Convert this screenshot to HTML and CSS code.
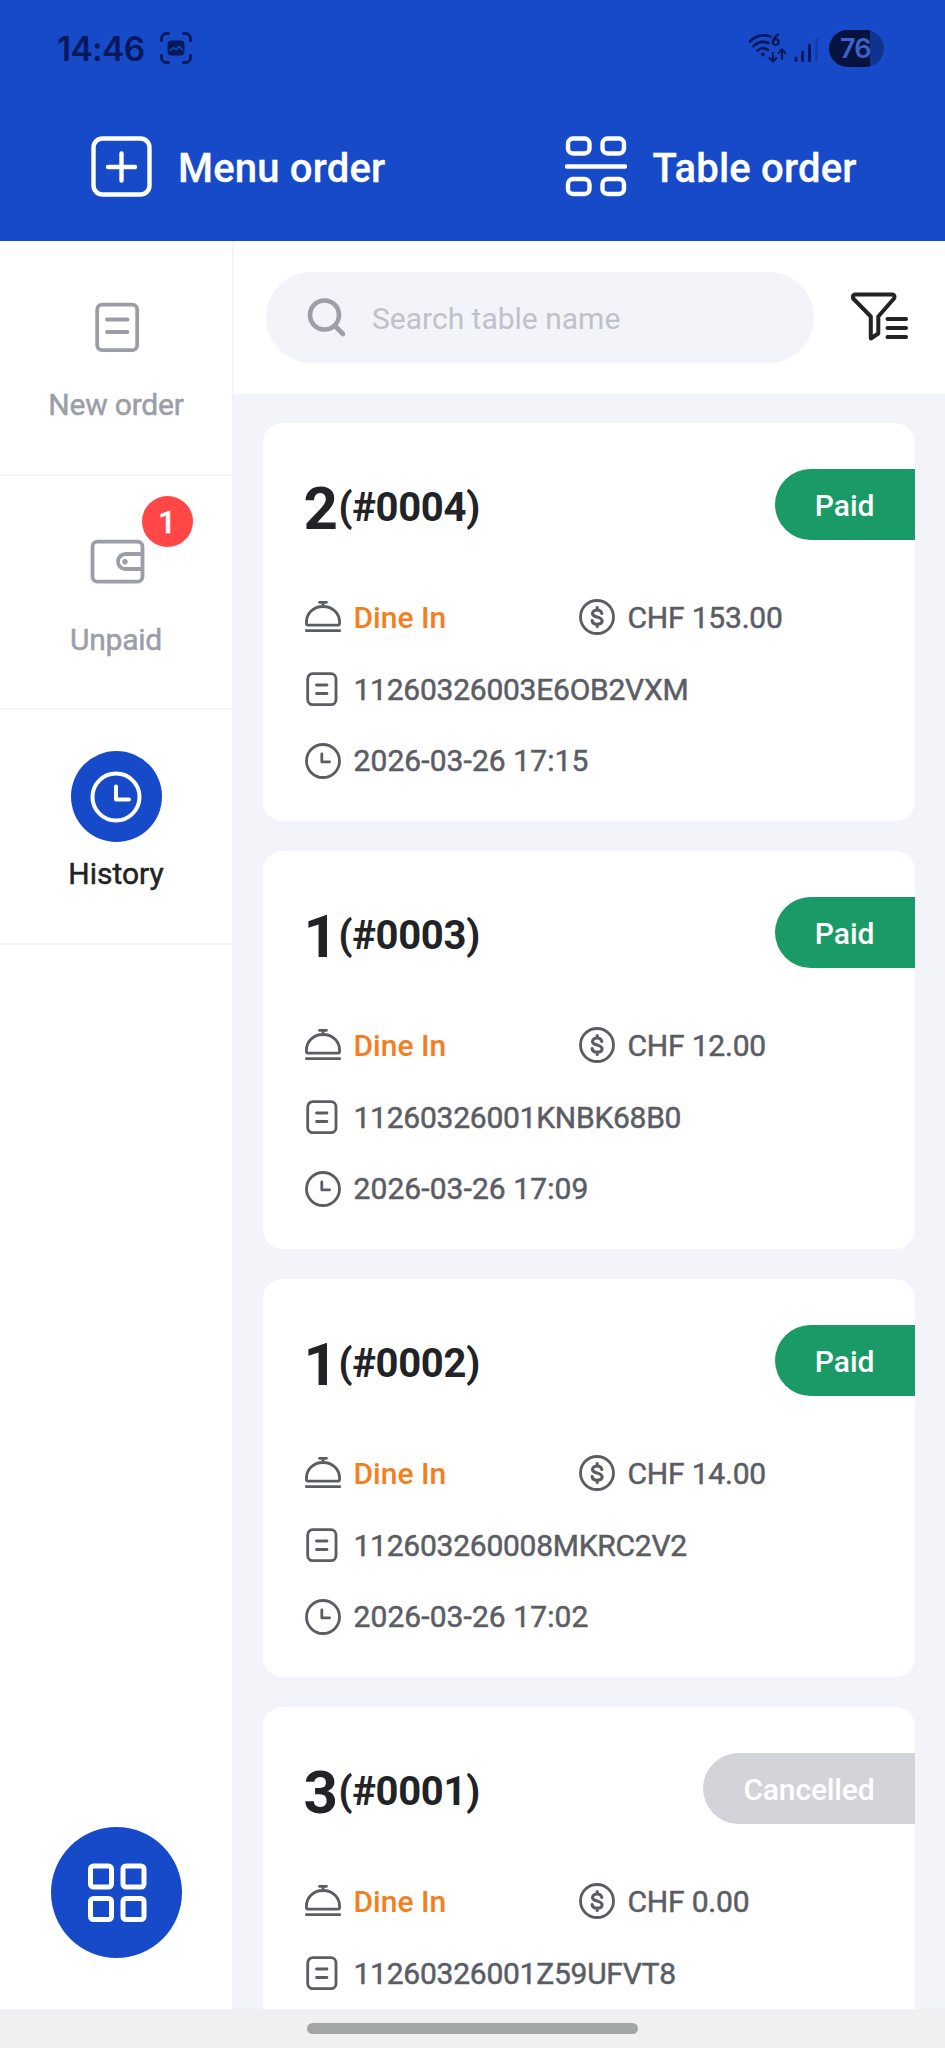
FILE: index.html
```html
<!DOCTYPE html>
<html lang="en">
<head>
<meta charset="utf-8">
<title>Orders</title>
<link rel="stylesheet" href="styles.css">
</head>
<body>
<svg class="sprite" aria-hidden="true">
  <symbol id="bell" viewBox="0 0 36 36"><path d="M14.500 3.300h7M18 3.500v4M1.500 25.200C.6 14.500 8.500 7.500 18 7.500S35.400 14.500 34.500 25.200q-.2 1-1.200 1H2.700q-1 0-1.200-1zM1.300 31.600h33.400"/></symbol>
  <symbol id="doc" viewBox="0 0 36 36"><rect x="2.700" y="2.700" width="28.300" height="31" rx="5"/><path d="M11.500 14h10.500M11.500 22.500h10.500"/></symbol>
  <symbol id="clock" viewBox="0 0 36 36"><circle cx="18" cy="18" r="16.500"/><path d="M16.800 11v7.800h7.800"/></symbol>
  <symbol id="coin" viewBox="0 0 36 36"><circle cx="18" cy="18" r="16.500"/><path stroke-width="3.100" d="M22.800 14.500c-.4-2.400-2.300-3.500-4.700-3.500-2.700 0-4.600 1.300-4.600 3.400 0 2.300 2.200 2.900 4.600 3.500 2.700.7 5 1.400 5 3.900 0 2.300-2.100 3.500-5 3.500-2.700 0-4.700-1.300-5-3.800M18.200 8.500v2.500M18.200 25v2.500"/></symbol>
</svg>
<header class="top">
  <div class="status">
    <span class="time">14:46</span>
    <svg class="shot" viewBox="0 0 32 32"><path class="line" d="M1.500 8.500v-2a5 5 0 0 1 5-5h2M23.500 1.500h2a5 5 0 0 1 5 5v2M30.500 23.500v2a5 5 0 0 1-5 5h-2M8.500 30.500h-2a5 5 0 0 1-5-5v-2"/><rect x="7.500" y="8.500" width="17" height="15" rx="4"/><path class="hill" d="M10 18.500l3.300-3 3 2.200 3-3.400 3.200 3.700"/></svg>
    <svg class="wifi" viewBox="0 0 38 30"><path class="line" d="M2 8.500C7.500 2.500 15 1.200 22.500 3.500M5.500 13.200C10 8.500 15.500 8 20.500 10M9.500 17.500c3-3 7-3 10.500-.5"/><circle cx="15" cy="21.500" r="2"/><path class="line thin" d="M30 1.500q-4.500 3-5 7M25 20v8M21.500 25l3.500 3.500 3.500-3.500M34 26v-9M30.500 20l3.500-3.500 3.500 3.500"/><circle class="line thin" cx="27.700" cy="9" r="2.900"/></svg>
    <svg class="signal" viewBox="0 0 24 26"><path d="M2 21v2.500M8.500 15v8.500M15.500 8v15.500"/><path class="dim" d="M22.300 2v21.500"/></svg>
    <span class="battery">76</span>
  </div>
  <nav class="actions">
    <a class="action menu"><svg viewBox="0 0 62 62"><rect x="2.500" y="2.500" width="56" height="56" rx="9"/><path d="M30.500 17.500v27M17 31h27"/></svg><span>Menu order</span></a>
    <a class="action table"><svg viewBox="0 0 62 62"><rect x="3" y="2.500" width="21.500" height="15" rx="5"/><rect x="37.500" y="2.500" width="21.500" height="15" rx="5"/><path d="M2 30.500h58"/><rect x="3" y="43" width="21.500" height="15" rx="5"/><rect x="37.500" y="43" width="21.500" height="15" rx="5"/></svg><span>Table order</span></a>
  </nav>
</header>
<main class="body">
  <aside class="side">
    <a class="tab"><span class="disc"><svg viewBox="0 0 60 60"><rect x="11.200" y="6.700" width="40" height="45.500" rx="5"/><path d="M21 21.500h20.500M21 34h20.500"/></svg></span><span class="name">New order</span></a>
    <a class="tab"><span class="disc"><svg viewBox="0 0 60 60"><rect x="6.500" y="9.700" width="50" height="40" rx="5"/><path d="M56 22H39.500a7.500 7.500 0 0 0 0 15H56"/><circle class="dot" cx="39" cy="29.800" r="2.700"/></svg><b class="count">1</b></span><span class="name">Unpaid</span></a>
    <a class="tab active"><span class="disc"><svg viewBox="0 0 60 60"><circle cx="30" cy="30" r="23.500"/><path d="M30 19.500v13h13"/></svg></span><span class="name">History</span></a>
    <a class="apps"><svg viewBox="0 0 60 60"><rect x="3.500" y="3" width="21" height="21" rx="3"/><rect x="36" y="3" width="21" height="21" rx="3"/><rect x="3.500" y="35.500" width="21" height="21" rx="3"/><rect x="36" y="35.500" width="21" height="21" rx="3"/></svg></a>
  </aside>
  <section class="content">
    <div class="tools">
      <div class="search"><svg viewBox="0 0 40 40"><circle cx="17.500" cy="17" r="14.500"/><path d="M28 28l8 8"/></svg><span>Search table name</span></div>
      <svg class="filter" viewBox="0 0 60 50"><path d="M5 3.500h37.500q3 1 1.500 4L28.300 25.500V42.500L20.800 47.500V25.500L3.200 7.500q-1-3 1.800-4z"/><path d="M37.500 28h18.500M37.500 37h18.500M37.500 46h18.500"/></svg>
    </div>
    <div class="list">
      <article class="card">
        <div class="head"><b class="num">2</b><b class="ref">(#0004)</b><span class="badge">Paid</span></div>
        <div class="row"><span class="cell kind"><svg><use href="#bell"/></svg><em>Dine In</em></span><span class="cell"><svg><use href="#coin"/></svg><span class="price">CHF 153.00</span></span></div>
        <div class="row"><svg><use href="#doc"/></svg><span class="code">11260326003E6OB2VXM</span></div>
        <div class="row"><svg><use href="#clock"/></svg><span class="date">2026-03-26 17:15</span></div>
      </article>
      <article class="card">
        <div class="head"><b class="num">1</b><b class="ref">(#0003)</b><span class="badge">Paid</span></div>
        <div class="row"><span class="cell kind"><svg><use href="#bell"/></svg><em>Dine In</em></span><span class="cell"><svg><use href="#coin"/></svg><span class="price">CHF 12.00</span></span></div>
        <div class="row"><svg><use href="#doc"/></svg><span class="code">11260326001KNBK68B0</span></div>
        <div class="row"><svg><use href="#clock"/></svg><span class="date">2026-03-26 17:09</span></div>
      </article>
      <article class="card">
        <div class="head"><b class="num">1</b><b class="ref">(#0002)</b><span class="badge">Paid</span></div>
        <div class="row"><span class="cell kind"><svg><use href="#bell"/></svg><em>Dine In</em></span><span class="cell"><svg><use href="#coin"/></svg><span class="price">CHF 14.00</span></span></div>
        <div class="row"><svg><use href="#doc"/></svg><span class="code">112603260008MKRC2V2</span></div>
        <div class="row"><svg><use href="#clock"/></svg><span class="date">2026-03-26 17:02</span></div>
      </article>
      <article class="card">
        <div class="head"><b class="num">3</b><b class="ref">(#0001)</b><span class="badge cancelled">Cancelled</span></div>
        <div class="row"><span class="cell kind"><svg><use href="#bell"/></svg><em>Dine In</em></span><span class="cell"><svg><use href="#coin"/></svg><span class="price">CHF 0.00</span></span></div>
        <div class="row"><svg><use href="#doc"/></svg><span class="code">11260326001Z59UFVT8</span></div>
      </article>
    </div>
  </section>
</main>
<footer class="gesture"><span class="handle"></span></footer>
</body>
</html>
```
FILE: styles.css
```css
* { box-sizing: border-box; }
body {
  margin: 0;
  height: 2048px;
  display: flex;
  flex-direction: column;
  overflow: hidden;
  background: #f2f4f9;
  color: #5b5d65;
  font: 500 30px/36px Roboto, "Liberation Sans", sans-serif;
}
svg { display: block; flex: none; fill: none; stroke: currentColor; stroke-linecap: round; stroke-linejoin: round; }
.sprite { position: absolute; width: 0; height: 0; }

.top { height: 241px; flex: none; background: #174ac9; color: #fff; }
.status { height: 96px; display: flex; align-items: center; padding: 0 61px 0 57px; color: #07195c; }
.time { width: 103px; padding-top: 1px; font: 600 33.500px/40px Inter, Roboto, sans-serif; letter-spacing: -0.700px; }
.shot { width: 32px; height: 32px; fill: currentColor; stroke: none; }
.shot .line { fill: none; stroke: currentColor; stroke-width: 3; }
.shot .hill { fill: none; stroke: #174ac9; stroke-width: 1.500; }
.wifi { width: 38px; height: 30px; margin-left: auto; fill: currentColor; stroke: none; }
.wifi .line { fill: none; stroke: currentColor; stroke-width: 2.600; }
.wifi .thin { stroke-width: 2.200; }
.signal { width: 24px; height: 26px; margin: 4px 0 0 8px; stroke-width: 3; }
.signal .dim { opacity: .35; stroke-width: 2; }
.battery {
  width: 55px; height: 37px; margin-left: 11px; padding-left: 11px;
  border-radius: 19px; color: #3c63c9;
  background: linear-gradient(90deg, #06123f 0 41px, #10338f 41px);
  font: 600 27px/37px Inter, Roboto, sans-serif;
  letter-spacing: -1px;
}
.actions { height: 141px; display: flex; }
.action { display: flex; align-items: center; width: 50%; }
.action svg { width: 62px; height: 62px; stroke-width: 4.400; }
.action span { font-size: 40px; line-height: 48px; padding-top: 5px; letter-spacing: .2px; -webkit-text-stroke: .3px; }
.menu { padding-left: 91px; gap: 25px; }
.table { padding-left: 92px; gap: 26px; }

.body { flex: 1; min-height: 0; display: flex; }
.side { width: 234px; flex: none; display: flex; flex-direction: column; background: #fff; border-right: 2px solid #f2f4f8; }
.tab { height: 234.500px; display: flex; flex-direction: column; align-items: center; padding-top: 41px; border-bottom: 2px solid #f3f4f6; color: #9b9ea7; font-weight: 400; letter-spacing: -.2px; -webkit-text-stroke: .5px; }
.disc { position: relative; width: 91px; height: 91px; border-radius: 50%; display: grid; place-items: center; }
.disc svg { width: 60px; height: 60px; stroke-width: 3.800; }
.dot { fill: currentColor; stroke: none; }
.name { margin-top: 14px; }
.count { position: absolute; left: 71px; top: -21px; width: 51px; height: 51px; border-radius: 50%; background: #ff4747; color: #fff; font: 500 31px/54px Roboto, sans-serif; text-align: center; }
.active { color: #222326; letter-spacing: 0; }
.active .disc { background: #174ac9; color: #fff; }
.active .disc svg { stroke-width: 4; }
.apps { margin: auto auto 51px 51px; width: 131px; height: 131px; border-radius: 50%; display: grid; place-items: center; background: #174ac9; color: #fff; }
.apps svg { width: 60px; height: 60px; stroke-width: 5; }

.content { flex: 1; min-width: 0; display: flex; flex-direction: column; }
.tools { height: 152.500px; flex: none; display: flex; align-items: center; background: #fff; padding-left: 32px; }
.search { width: 548px; height: 91px; border-radius: 46px; background: #f3f4f9; display: flex; align-items: center; gap: 25px; padding-left: 41px; color: #bfc1ca; font-weight: 400; }
.search svg { width: 40px; height: 40px; margin-top: 2px; color: #9c9ea8; stroke-width: 4.600; }
.search span { padding-top: 4px; }
.filter { width: 60px; height: 50px; margin: 0 0 3px 36px; color: #222326; stroke-width: 4; }
.list { flex: 1; min-height: 0; overflow: hidden; padding: 29.500px 30.500px 0 28.500px; display: flex; flex-direction: column; gap: 30.500px; }
.card { height: 397.500px; flex: none; background: #fff; border-radius: 20px; padding: 46px 0 0 42px; }
.head { height: 71px; display: flex; align-items: center; color: #222326; margin-bottom: 41.500px; }
.num { width: 33px; margin-left: -1px; font: 700 60px/70px Roboto, sans-serif; padding-top: 8px; }
.ref { margin-left: 2px; padding-top: 6px; font: 700 40px/48px Roboto, sans-serif; letter-spacing: -.3px; }
.badge { margin-left: auto; height: 71px; padding: 0 40px; line-height: 74px; border-radius: 36px 0 0 36px; background: #199a67; color: #fff; }
.cancelled { background: #d3d4da; letter-spacing: -.15px; }
.row, .cell { display: flex; align-items: center; }
.row { height: 71.700px; font-weight: 400; -webkit-text-stroke: .5px; }
.row span { padding-top: 1px; }
.row .cell { padding-top: 0; }
.row svg { width: 36px; height: 36px; margin-right: 13px; stroke-width: 2.800; }
.kind { width: 274px; }
.kind em { font-style: normal; font-weight: 500; color: #f57f20; padding-top: 1px; -webkit-text-stroke: 0; }
.price { letter-spacing: -.2px; }
.code { letter-spacing: -.25px; }
.date { letter-spacing: .08px; }

.gesture { height: 39px; flex: none; background: #f0f0f2; display: flex; align-items: center; justify-content: center; }
.handle { width: 331px; height: 11px; border-radius: 6px; background: #a4a5a7; }
```
